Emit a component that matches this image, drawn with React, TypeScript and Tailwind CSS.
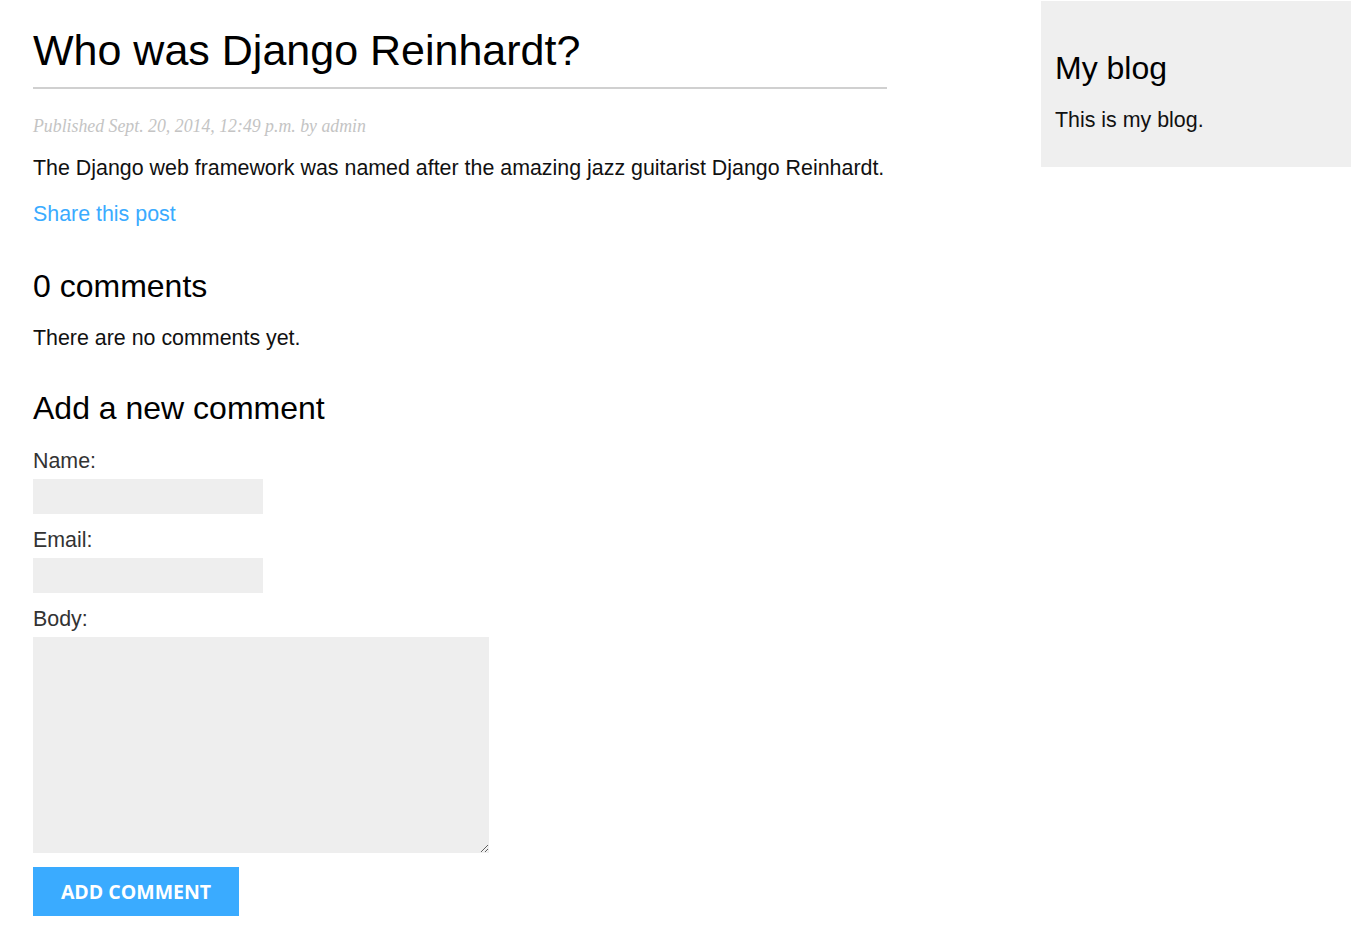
export default function App() {
  return (
    <div className="min-h-[936px] bg-white font-['Liberation_Sans',Arial,sans-serif] text-[#111]">
      <div className="flex items-start">
        {/* Main content */}
        <div className="ml-[33px] w-[854px]">
          <h1 className="mt-[24px] border-b-2 border-[#d0d0d0] pb-[11px] text-[43px] leading-[52px] font-normal text-black">
            Who was Django Reinhardt?
          </h1>
          <p className="mt-[25px] font-['Liberation_Serif',Georgia,serif] text-[17.8px] leading-[24px] italic text-[#c4c4c4]">
            Published Sept. 20, 2014, 12:49 p.m. by admin
          </p>
          <p className="mt-[16px] text-[21.4px] leading-[28px] text-[#111]">
            The Django web framework was named after the amazing jazz guitarist Django Reinhardt.
          </p>
          <p className="mt-[18px] text-[21.4px] leading-[28px]">
            <a href="#" className="text-[#3aabff]">Share this post</a>
          </p>

          <h2 className="mt-[38px] text-[32px] leading-[40px] font-normal text-black">0 comments</h2>
          <p className="mt-[18px] text-[21.4px] leading-[28px]">There are no comments yet.</p>

          <h2 className="mt-[36px] text-[32px] leading-[40px] font-normal text-black">Add a new comment</h2>
          <form className="mt-[19px] flex flex-col items-start">
            <label className="text-[21.4px] leading-[28px] text-[#333]">Name:</label>
            <input type="text" className="mt-[4px] h-[35px] w-[230px] bg-[#eeeeee] outline-none" />
            <label className="mt-[12px] text-[21.4px] leading-[28px] text-[#333]">Email:</label>
            <input type="text" className="mt-[4px] h-[35px] w-[230px] bg-[#eeeeee] outline-none" />
            <label className="mt-[12px] text-[21.4px] leading-[28px] text-[#333]">Body:</label>
            <textarea className="mt-[4px] h-[216px] w-[456px] bg-[#eeeeee] outline-none" />
            <button
              type="button"
              className="mt-[14px] h-[49px] w-[206px] bg-[#3aabff] font-['Open_Sans',sans-serif] text-[19.5px] font-bold text-white uppercase"
            >
              Add comment
            </button>
          </form>
        </div>

        {/* Sidebar */}
        <div className="mt-px ml-auto h-[166px] w-[310px] bg-[#efefef] px-[14px] pt-[47px]">
          <h2 className="text-[32px] leading-[40px] font-normal text-black">My blog</h2>
          <p className="mt-[18px] text-[21.4px] leading-[28px] text-[#111]">This is my blog.</p>
        </div>
      </div>
    </div>
  );
}
